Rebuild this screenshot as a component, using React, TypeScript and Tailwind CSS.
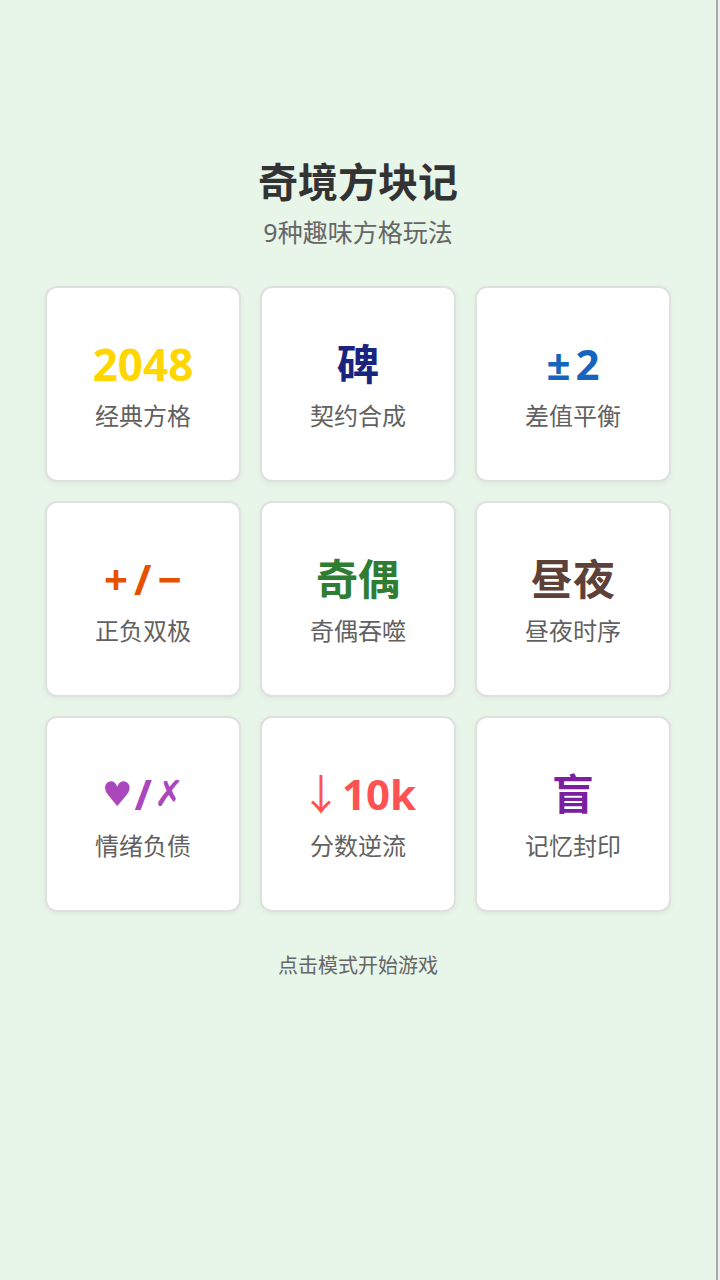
import React from "react";

const dj = { fontFamily: '"DejaVu Sans", sans-serif' };

const modes: { icon: React.ReactNode; label: string; color: string }[] = [
  { icon: <span className="text-[44px]">2048</span>, label: "经典方格", color: "text-[#ffd600]" },
  { icon: "碑", label: "契约合成", color: "text-[#1a237e]" },
  {
    icon: (
      <>
        <span className="mr-[5px]">±</span>2
      </>
    ),
    label: "差值平衡",
    color: "text-[#1565c0]",
  },
  {
    icon: (
      <>
        +<span className="mx-[6px]">/</span>−
      </>
    ),
    label: "正负双极",
    color: "text-[#e65100]",
  },
  { icon: "奇偶", label: "奇偶吞噬", color: "text-[#2e7d32]" },
  { icon: "昼夜", label: "昼夜时序", color: "text-[#5d4037]" },
  {
    icon: (
      <>
        <span style={dj} className="text-[34px]">♥</span>
        <span className="mx-[2px]">/</span>
        <span style={dj} className="text-[36px] font-normal">✗</span>
      </>
    ),
    label: "情绪负债",
    color: "text-[#ab47bc]",
  },
  {
    icon: (
      <>
        <span className="font-normal">↓</span>10k
      </>
    ),
    label: "分数逆流",
    color: "text-[#ff5252]",
  },
  { icon: "盲", label: "记忆封印", color: "text-[#7b1fa2]" },
];

export default function App() {
  return (
    <div
      className="flex h-[1280px] w-[720px]"
      style={{ fontFamily: '"Noto Sans", "Noto Sans CJK SC", "DejaVu Sans", sans-serif' }}
    >
      <div className="flex w-[716px] flex-col items-center bg-[#e8f5e9] pt-[158px]">
        <h1 className="text-[40px] font-bold leading-[48px] text-[#333333]">奇境方块记</h1>
        <p className="mt-[8px] text-[25px] leading-[36px] text-[#666666]">9种趣味方格玩法</p>
        <div className="mt-[36px] grid w-[626px] grid-cols-3 gap-[19px]">
          {modes.map((m) => (
            <div
              key={m.label}
              className="flex h-[196px] flex-col items-center justify-center rounded-[12px] border-2 border-[#e0e0e0] bg-white shadow-[0_2px_6px_rgba(0,0,0,0.05)]"
            >
              <div className={`flex h-[56px] items-center text-[42px] font-bold leading-[56px] ${m.color}`}>
                {m.icon}
              </div>
              <div className="mt-[8px] text-[24px] leading-[32px] text-[#616161]">{m.label}</div>
            </div>
          ))}
        </div>
        <p className="mt-[40px] text-[20px] leading-[28px] text-[#666666]">点击模式开始游戏</p>
      </div>
      <div className="w-[2px] bg-[#a8a8a8]" />
      <div className="w-[2px] bg-[#eeeeee]" />
    </div>
  );
}
